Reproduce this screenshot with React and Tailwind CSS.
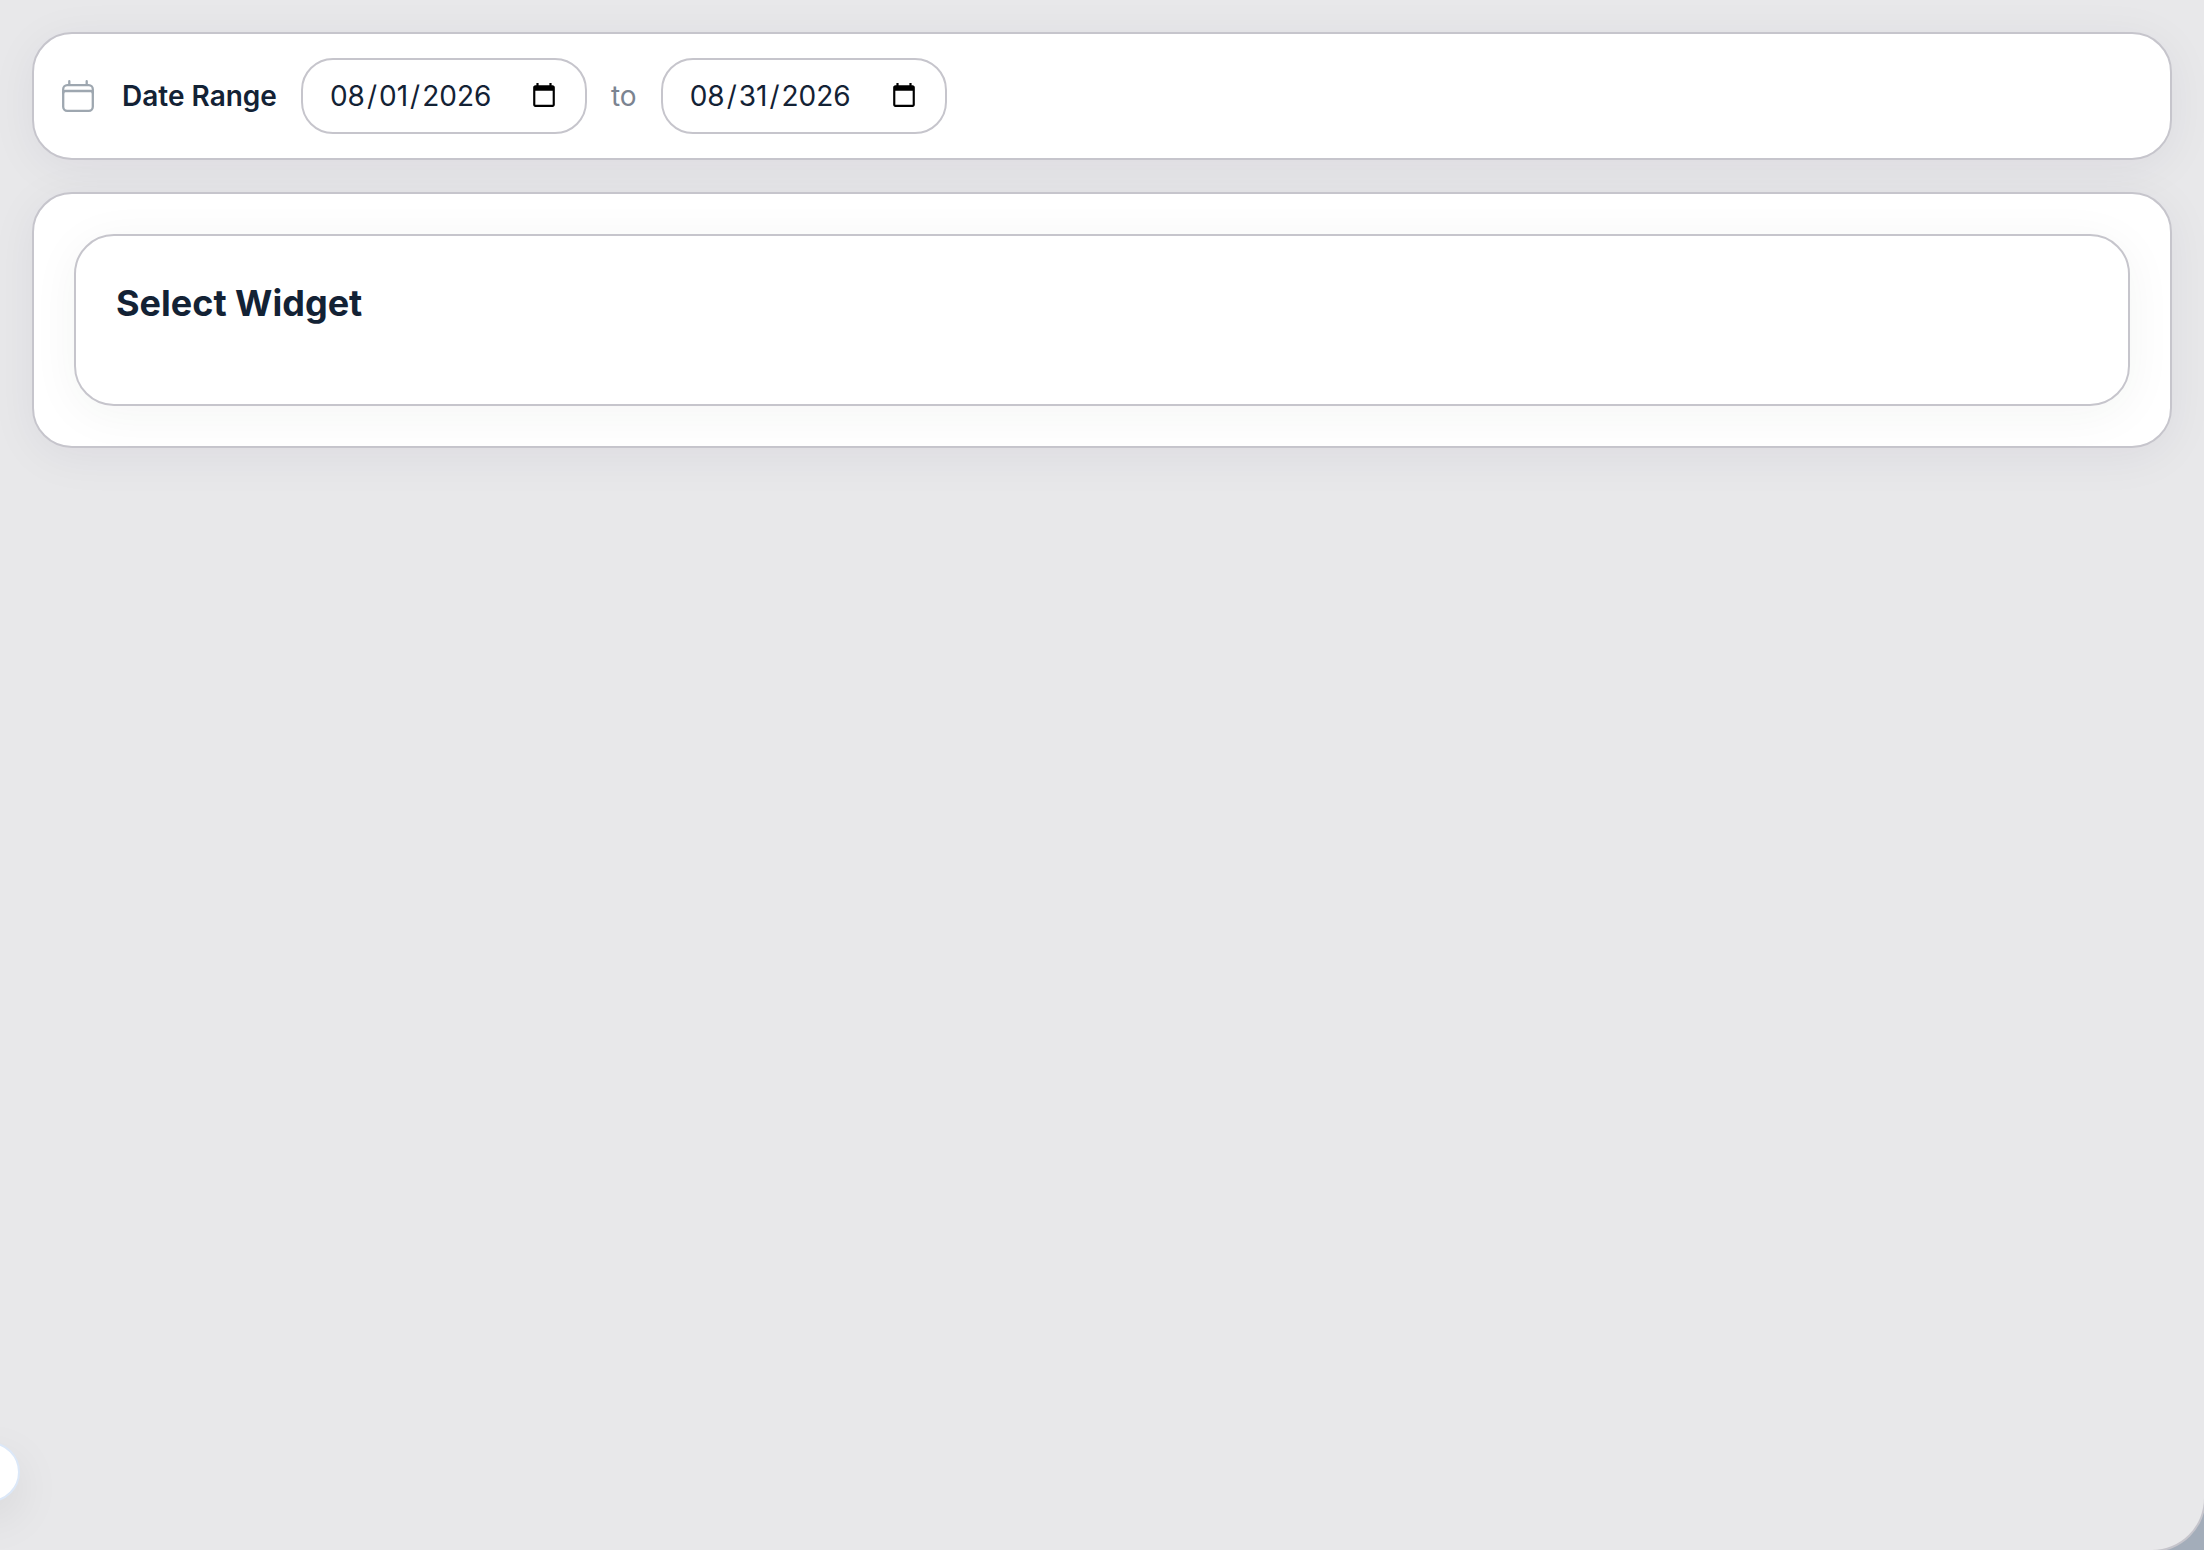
import React, { useState } from 'react';

const CalendarIcon = () => (
  <svg
    className="size-10 shrink-0 text-[#9ea7b0]"
    viewBox="0 0 40 40"
    fill="none"
    stroke="currentColor"
    strokeWidth="2.3"
    strokeLinecap="round"
    strokeLinejoin="round"
    aria-hidden="true"
  >
    <rect x="5.2" y="9.2" width="29.6" height="25.6" rx="4" />
    <path d="M5.2 17c0-1.400.8-2 2.200-2h25.200c1.400 0 2.200.6 2.200 2M11.300 5.200v3.500M28.700 5.200v3.500" />
  </svg>
);

const DateInput = ({ label, value, onChange }) => (
  <input
    type="date"
    aria-label={label}
    value={value}
    onChange={(e) => onChange(e.target.value)}
    className="h-[76px] w-[286px] rounded-[32px] border-2 border-[#c6c5cc] bg-white px-[25px] text-[28px] text-[#132235] outline-none [&::-webkit-datetime-edit-day-field]:px-[2px] [&::-webkit-datetime-edit-month-field]:px-[2px] [&::-webkit-datetime-edit-year-field]:px-[2px]"
  />
);

const App = () => {
  const [startDate, setStartDate] = useState('2026-08-01');
  const [endDate, setEndDate] = useState('2026-08-31');

  return (
    <div className="h-screen overflow-hidden bg-[#a3adba] font-['Inter',sans-serif] text-[#132235]">
      <main className="relative flex h-full flex-col gap-8 rounded-br-[52px] bg-[#e8e8ea] p-8 shadow-[0_0_0_2px_#c6c5cc]">
        <section className="flex items-center gap-6 rounded-[40px] border-2 border-[#c6c5cc] bg-white px-6 py-6 shadow-[0_8px_48px_rgba(30,20,60,0.06)]">
          <CalendarIcon />
          <span className="text-[28px] font-semibold">Date Range</span>
          <DateInput label="Start date" value={startDate} onChange={setStartDate} />
          <span className="text-[28px] text-[#7b8491]">to</span>
          <DateInput label="End date" value={endDate} onChange={setEndDate} />
        </section>

        <section className="rounded-[40px] border-2 border-[#c6c5cc] bg-white p-10 shadow-[0_8px_48px_rgba(30,20,60,0.06)]">
          <div className="rounded-[40px] border-2 border-[#c6c5cc] bg-white px-10 pt-10 pb-[74px] shadow-[0_8px_48px_rgba(30,50,40,0.05)]">
            <h2 className="text-[36px] leading-[54px] font-bold">Select Widget</h2>
          </div>
        </section>

        <button
          type="button"
          aria-label="Toggle sidebar"
          className="absolute bottom-12 -left-10 size-15 rounded-full border-2 border-[#dce8f8] bg-white shadow-[0_16px_48px_rgba(0,0,0,0.08)]"
        />
      </main>
    </div>
  );
};

export default App;
